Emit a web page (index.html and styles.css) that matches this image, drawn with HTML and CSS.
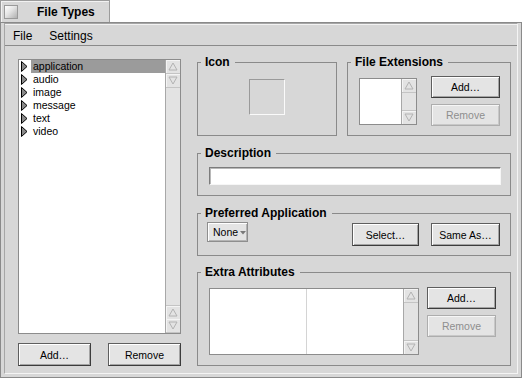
FILE: index.html
```html
<!DOCTYPE html>
<html lang="en">
<head>
    <meta charset="UTF-8">
    <title>File Types</title>
    <link rel="stylesheet" href="styles.css">
</head>
<body>
    <div class="tab">
        <span class="close-box"></span>
        <span class="tab-title">File Types</span>
    </div>
    <div class="window">
        <div class="frame">
            <div class="menubar">
                <span class="menu-item">File</span>
                <span class="menu-item">Settings</span>
            </div>

            <div class="content">
                <!-- 왼쪽: 타입 목록 -->
                <div class="types-col">
                    <div class="list types-list">
                        <ul class="list-body">
                            <li class="selected"><svg class="expander" viewBox="0 0 7 11"><polygon points="0.5,0.5 6,5.5 0.5,10.5"/></svg><span class="name">application</span></li>
                            <li><svg class="expander" viewBox="0 0 7 11"><polygon points="0.5,0.5 6,5.5 0.5,10.5"/></svg><span class="name">audio</span></li>
                            <li><svg class="expander" viewBox="0 0 7 11"><polygon points="0.5,0.5 6,5.5 0.5,10.5"/></svg><span class="name">image</span></li>
                            <li><svg class="expander" viewBox="0 0 7 11"><polygon points="0.5,0.5 6,5.5 0.5,10.5"/></svg><span class="name">message</span></li>
                            <li><svg class="expander" viewBox="0 0 7 11"><polygon points="0.5,0.5 6,5.5 0.5,10.5"/></svg><span class="name">text</span></li>
                            <li><svg class="expander" viewBox="0 0 7 11"><polygon points="0.5,0.5 6,5.5 0.5,10.5"/></svg><span class="name">video</span></li>
                        </ul>
                        <div class="vscroll">
                            <span class="arrow"><svg viewBox="0 0 10 9"><polygon points="1,8 5,1 9,8"/></svg></span>
                            <span class="arrow"><svg viewBox="0 0 10 9"><polygon points="1,1 5,8 9,1"/></svg></span>
                            <span class="track"></span>
                            <span class="arrow top-line"><svg viewBox="0 0 10 9"><polygon points="1,8 5,1 9,8"/></svg></span>
                            <span class="arrow"><svg viewBox="0 0 10 9"><polygon points="1,1 5,8 9,1"/></svg></span>
                        </div>
                    </div>
                    <div class="button-row">
                        <button class="btn">Add…</button>
                        <button class="btn">Remove</button>
                    </div>
                </div>

                <!-- 오른쪽: 상세 정보 -->
                <div class="detail-col">
                    <div class="top-row">
                        <fieldset class="box icon-box">
                            <legend>Icon</legend>
                            <div class="icon-well"></div>
                        </fieldset>
                        <fieldset class="box ext-box">
                            <legend>File Extensions</legend>
                            <div class="ext-body">
                                <div class="list ext-list">
                                    <div class="list-body"></div>
                                    <div class="vscroll">
                                        <span class="arrow"><svg viewBox="0 0 10 9"><polygon points="1,8 5,1 9,8"/></svg></span>
                                        <span class="track"></span>
                                        <span class="arrow top-line"><svg viewBox="0 0 10 9"><polygon points="1,1 5,8 9,1"/></svg></span>
                                    </div>
                                </div>
                                <div class="btn-stack">
                                    <button class="btn">Add…</button>
                                    <button class="btn" disabled>Remove</button>
                                </div>
                            </div>
                        </fieldset>
                    </div>

                    <fieldset class="box desc-box">
                        <legend>Description</legend>
                        <div class="text-field"></div>
                    </fieldset>

                    <fieldset class="box pref-box">
                        <legend>Preferred Application</legend>
                        <div class="pref-body">
                            <span class="popup">None<svg viewBox="0 0 6 4"><polygon points="0,0 6,0 3,3.5"/></svg></span>
                            <button class="btn select-btn">Select…</button>
                            <button class="btn">Same As…</button>
                        </div>
                    </fieldset>

                    <fieldset class="box extra-box">
                        <legend>Extra Attributes</legend>
                        <div class="extra-body">
                            <div class="list extra-list">
                                <div class="list-body columns">
                                    <div class="column"></div>
                                    <div class="column"></div>
                                </div>
                                <div class="vscroll">
                                    <span class="arrow"><svg viewBox="0 0 10 9"><polygon points="1,8 5,1 9,8"/></svg></span>
                                    <span class="track"></span>
                                    <span class="arrow top-line"><svg viewBox="0 0 10 9"><polygon points="1,1 5,8 9,1"/></svg></span>
                                </div>
                            </div>
                            <div class="btn-stack">
                                <button class="btn">Add…</button>
                                <button class="btn" disabled>Remove</button>
                            </div>
                        </div>
                    </fieldset>
                </div>
            </div>
        </div>
    </div>
</body>
</html>
```

FILE: styles.css
```css
body {
    margin: 0;
    background-color: #fff;
    font-family: 'Liberation Sans', Arial, sans-serif;
    font-size: 10.5px;
    color: #000;
}

/* 타이틀 탭 */
.tab {
    width: 110px;
    height: 22px;
    box-sizing: border-box;
    padding: 4px 0 0 3px;
    border: 1px solid #9c9c9c;
    border-bottom: none;
    background-color: #d7d7d7;
    box-shadow: inset 1px 1px 0 #f2f2f2;
    display: flex;
    align-items: flex-start;
}
.close-box {
    width: 14px;
    height: 14px;
    box-sizing: border-box;
    border: 1px solid #9a9a9a;
    background: linear-gradient(135deg, #fff 0%, #e4e4e4 45%, #b0b0b0 100%);
}
.tab-title {
    margin-left: 19px;
    font-size: 12px;
    font-weight: bold;
    line-height: 14px;
}

/* 창 프레임 */
.window {
    width: 522px;
    height: 356px;
    box-sizing: border-box;
    padding: 0 3px 3px 3px;
    border: 1px solid #8a8a8a;
    background-color: #d7d7d7;
}
.frame {
    height: 100%;
    box-sizing: border-box;
    border: 1px solid #a6a6a6;
    border-right-color: #f4f4f4;
    border-bottom-color: #f4f4f4;
    display: flex;
    flex-direction: column;
}
.menubar {
    height: 22px;
    box-sizing: border-box;
    padding: 5px 0 0 8px;
    border-bottom: 1px solid #8a8a8a;
    box-shadow: inset 0 1px 0 #f2f2f2;
    font-size: 12px;
    line-height: 14px;
    display: flex;
}
.menu-item {
    margin-right: 17px;
}

.content {
    flex: 1;
    display: flex;
    gap: 16px;
    padding: 9px 0 0 13px;
}

/* 목록 */
.list {
    display: flex;
    box-sizing: border-box;
    border: 1px solid #8c8c8c;
    background-color: #fff;
}
.list-body {
    flex: 1;
    margin: 0;
    padding: 0;
    list-style: none;
}
.list-body li {
    height: 13px;
    display: flex;
    align-items: center;
}
.expander {
    width: 7px;
    height: 11px;
    margin: 0 3px 0 2px;
    fill: #8a8a8a;
    stroke: #000;
    stroke-width: 1;
}
.name {
    flex: 1;
    height: 13px;
    line-height: 13px;
    padding-left: 2px;
}
.selected .name {
    background-color: #9b9b9b;
}
.columns {
    display: flex;
}
.column {
    width: 96px;
    border-right: 1px solid #d4d4d4;
}
.column:last-child {
    flex: 1;
    border-right: none;
}

/* 스크롤바 */
.vscroll {
    width: 15px;
    box-sizing: border-box;
    border-left: 1px solid #a8a8a8;
    background-color: #e3e3e3;
    display: flex;
    flex-direction: column;
}
.arrow {
    height: 14px;
    box-sizing: border-box;
    border-bottom: 1px solid #c4c4c4;
    box-shadow: inset 1px 1px 0 #f4f4f4;
    display: flex;
    align-items: center;
    justify-content: center;
}
.arrow.top-line {
    border-top: 1px solid #c4c4c4;
    border-bottom: none;
}
.arrow svg {
    width: 10px;
    height: 9px;
    fill: none;
    stroke: #b2b2b2;
    stroke-width: 1;
}
.track {
    flex: 1;
}

.types-col {
    width: 163px;
    padding-top: 4px;
    display: flex;
    flex-direction: column;
}
.types-list {
    height: 275px;
}
.button-row {
    margin-top: 9px;
    display: flex;
    justify-content: space-between;
}
.button-row .btn {
    width: 73px;
    height: 23px;
}

/* 버튼 */
.btn {
    width: 69px;
    height: 22px;
    padding: 0;
    box-sizing: border-box;
    border: 1px solid #5e5e5e;
    border-right-color: #3c3c3c;
    border-bottom-color: #3c3c3c;
    background-color: #e4e4e4;
    box-shadow: inset 1px 1px 0 #fff, inset -1px -1px 0 #a4a4a4;
    font-family: inherit;
    font-size: 10.5px;
    color: #000;
}
.btn:disabled {
    border-color: #adadad;
    color: #8e8e8e;
    box-shadow: inset 1px 1px 0 #f6f6f6, inset -1px -1px 0 #c8c8c8;
}

/* 상자 */
.detail-col {
    width: 314px;
    display: flex;
    flex-direction: column;
}
.box {
    margin: 0;
    padding: 0;
    min-width: 0;
    box-sizing: border-box;
    border: 1px solid #8a8a8a;
}
.box legend {
    margin-left: 3px;
    padding: 0 5px 0 4px;
    font-size: 12px;
    font-weight: bold;
    line-height: 14px;
}
.top-row {
    display: flex;
    gap: 10px;
    height: 81px;
}
.icon-box {
    width: 140px;
    height: 81px;
}
.icon-well {
    width: 36px;
    height: 36px;
    box-sizing: border-box;
    margin: 10px auto 0;
    border: 1px solid;
    border-color: #9a9a9a #fafafa #fafafa #9a9a9a;
}
.ext-box {
    width: 164px;
    height: 81px;
}
.ext-body {
    display: flex;
    gap: 14px;
    padding: 7px 9px 0 11px;
}
.ext-list {
    width: 58px;
    height: 47px;
    margin-top: 2px;
}
.btn-stack {
    display: flex;
    flex-direction: column;
    gap: 6px;
}

.desc-box {
    height: 50px;
    margin-top: 10px;
}
.text-field {
    height: 18px;
    box-sizing: border-box;
    margin: 7px 9px 0 11px;
    border: 1px solid;
    border-color: #7c7c7c #f6f6f6 #f6f6f6 #7c7c7c;
    box-shadow: inset 1px 1px 0 #b8b8b8;
    background-color: #fff;
}

.pref-box {
    height: 50px;
    margin-top: 10px;
}
.pref-body {
    display: flex;
    align-items: flex-start;
    gap: 12px;
    padding: 2px 10px 0 9px;
}
.popup {
    width: 41px;
    height: 20px;
    box-sizing: border-box;
    padding-left: 5px;
    border: 1px solid #8e8e8e;
    background-color: #e4e4e4;
    box-shadow: inset 1px 1px 0 #fff, inset -1px -1px 0 #b4b4b4;
    display: flex;
    align-items: center;
    gap: 2px;
}
.popup svg {
    width: 6px;
    height: 4px;
    margin-top: 2px;
    fill: #7a7a7a;
}
.pref-body .btn {
    height: 23px;
    margin-top: 1px;
}
.select-btn {
    margin-left: auto;
}
.pref-body .select-btn {
    width: 67px;
}

.extra-box {
    height: 101px;
    margin-top: 9px;
}
.extra-body {
    display: flex;
    gap: 8px;
    padding: 8px 14px 0 11px;
}
.extra-list {
    width: 210px;
    height: 67px;
    margin-top: 1px;
}
```
